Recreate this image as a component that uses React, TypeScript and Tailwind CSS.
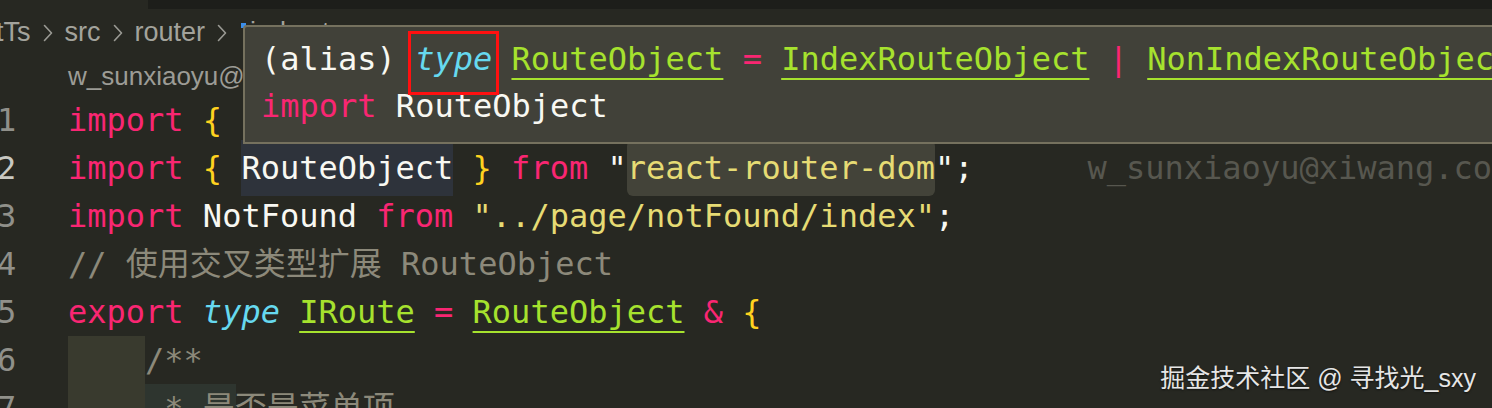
import React from "react";

const mono = "font-['DejaVu_Sans_Mono','Noto_Sans_CJK_SC',monospace]";
const sans = "font-['Liberation_Sans','Noto_Sans_CJK_SC',sans-serif]";

const kw = "text-[#f92672]";
const str = "text-[#e6db74]";
const fg = "text-[#f8f8f2]";
const brace = "text-[#ffd21f]";
const cm = "text-[#8c897a]";
const ty = "text-[#a6e22e] underline decoration-2 underline-offset-[8px] decoration-[#a6e22e]";
const cy = "text-[#66d9ef] italic";

function Chevron() {
  return (
    <svg viewBox="0 0 10 18" className="mx-[12px] h-[18px] w-[10px]" fill="none">
      <path d="M1.5 1.5 L8.5 9 L1.5 16.5" stroke="#9a9a94" strokeWidth="1.6" strokeLinecap="round" strokeLinejoin="round" />
    </svg>
  );
}

function Line({ n, active, children }: { n: number; active?: boolean; children?: React.ReactNode }) {
  return (
    <div className="flex h-[48px] items-center">
      <div className={`w-[68px] shrink-0 -ml-[3px] ${active ? "text-[#c8c8c2]" : "text-[#90908a]"}`}>{n}</div>
      <div className="h-[48px] whitespace-pre pl-[3px] leading-[48px]">{children}</div>
    </div>
  );
}

export default function App() {
  return (
    <div className={`relative h-[408px] w-[1492px] overflow-hidden bg-[#272822] ${mono} text-[32px] leading-[48px]`}>
      {/* tab bar edge */}
      <div className="flex h-[9px]">
        <div className="w-[148px]" />
        <div className="flex-1 bg-[#1d1e1a]" />
      </div>

      {/* breadcrumbs */}
      <div className={`flex h-[47px] items-center -ml-[4px] ${sans} text-[27px] leading-none text-[#a3a39c]`}>
        <span>tTs</span>
        <Chevron />
        <span>src</span>
        <Chevron />
        <span>router</span>
        <Chevron />
        <span className="ml-[2px] h-[5px] w-[5px] self-start mt-[14px] bg-[#3b8eea]" />
        <span className="ml-[4px]">index.tsx</span>
      </div>

      {/* codelens */}
      <div className={`flex h-[40px] items-center pl-[68px] ${sans} text-[26px] leading-none text-[#9c9c96]`}>
        w_sunxiaoyu@xiwang.com, 1个月前 | 1 author
      </div>

      {/* code */}
      <Line n={1}>
        <span className={kw}>import</span> <span className={brace}>{"{"}</span> <span className={fg}>IndexRouteObject</span>
      </Line>
      <Line n={2} active>
        <span className={kw}>import</span> <span className={brace}>{"{"}</span>{" "}
        <span className={`${fg} bg-[#2e333b] py-[9px]`}>RouteObject</span> <span className={brace}>{"}"}</span>{" "}
        <span className={kw}>from</span> <span className={fg}>"</span>
        <span className={`${str} rounded-[6px] bg-[#434339] py-[9px]`}>react-router-dom</span>
        <span className={fg}>";</span>
        <span className="ml-[114px] text-[#57574f]">w_sunxiaoyu@xiwang.com</span>
      </Line>
      <Line n={3}>
        <span className={kw}>import</span> <span className={fg}>NotFound</span> <span className={kw}>from</span>{" "}
        <span className={str}>"../page/notFound/index"</span>
        <span className={fg}>;</span>
      </Line>
      <Line n={4}>
        <span className={cm}>// 使用交叉类型扩展 RouteObject</span>
      </Line>
      <Line n={5}>
        <span className={kw}>export</span> <span className={cy}>type</span> <span className={ty}>IRoute</span>{" "}
        <span className={kw}>=</span> <span className={ty}>RouteObject</span> <span className={kw}>&amp;</span>{" "}
        <span className={brace}>{"{"}</span>
      </Line>
      <Line n={6}>
        <span className="inline-block h-[48px] w-[77px] bg-[#393a2e] align-top" />
        <span className={cm}>/**</span>
      </Line>
      <Line n={7}>
        <span className="inline-block h-[48px] w-[77px] bg-[#393a2e] align-top" />
        <span className={`relative inline-block h-[48px] align-top ${cm}`}>
          <span className="absolute left-0 top-0 h-[48px] w-[91px] bg-[#2e352f]" />
          <span className="relative">{" * 是否是菜单项"}</span>
        </span>
      </Line>

      {/* hover widget */}
      <div className="absolute left-[243px] top-[25px] h-[119px] w-[1300px] rounded-tl-[4px] border-2 border-[#75715e] bg-[#414139] pl-[16px] pt-[9px] leading-[47px]">
        <div className="whitespace-pre">
          <span className={fg}>(alias) </span>
          <span className={cy}>type</span> <span className={ty}>RouteObject</span> <span className={kw}>=</span>{" "}
          <span className={ty}>IndexRouteObject</span> <span className={kw}>|</span>{" "}
          <span className={ty}>NonIndexRouteObject</span>
        </div>
        <div className="whitespace-pre">
          <span className={kw}>import</span> <span className={fg}>RouteObject</span>
        </div>
        <div className="absolute left-[163px] top-[4px] h-[64px] w-[91px] border-[3px] border-[#ff1010]" />
      </div>

      {/* watermark */}
      <div
        className={`absolute right-[16px] top-[362px] ${sans} text-[25px] leading-[32px] text-[#e6e6e6] [text-shadow:0_1px_2px_rgba(0,0,0,0.6)]`}
      >
        掘金技术社区 @ 寻找光_sxy
      </div>
    </div>
  );
}
